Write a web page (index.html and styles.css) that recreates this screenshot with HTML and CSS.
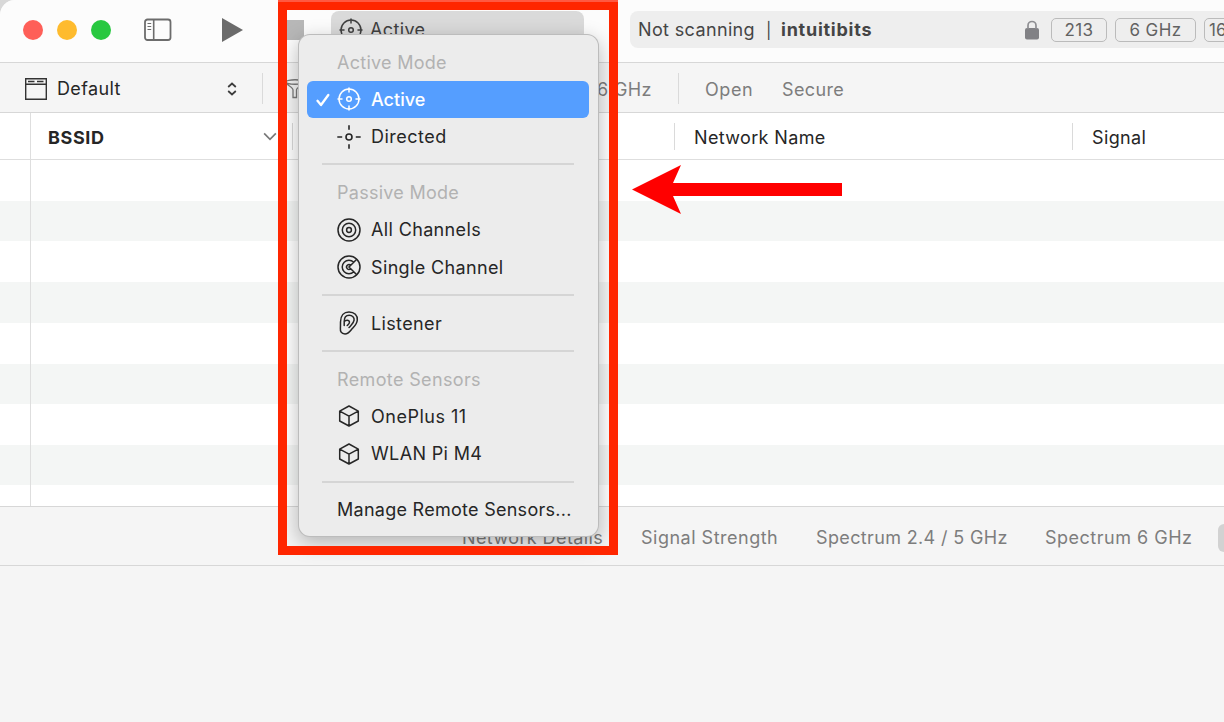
FILE: index.html
```html
<!DOCTYPE html>
<html lang="en">
<head>
<meta charset="utf-8">
<title>WiFi Explorer</title>
<link rel="stylesheet" href="styles.css">
</head>
<body>
<svg class="defs" width="0" height="0">
  <symbol id="target" viewBox="0 0 24 24"><g fill="none" stroke="currentColor" stroke-width="1.5" stroke-linecap="round"><circle cx="12" cy="12" r="10"/><circle cx="12" cy="12" r="2.3"/><path d="M12 1v4M12 19v4M1 12h4M19 12h4"/></g></symbol>
  <symbol id="cross" viewBox="0 0 24 24"><g fill="none" stroke="currentColor" stroke-width="1.6"><circle cx="12" cy="12" r="3"/><path d="M12 .3v4.4M12 19.3v4.4M.3 12h4.9M18.800 12h4.9"/></g></symbol>
  <symbol id="rings" viewBox="0 0 24 24"><g fill="none" stroke="currentColor" stroke-width="1.5"><circle cx="12" cy="12" r="11"/><circle cx="12" cy="12" r="6.700"/><circle cx="12" cy="12" r="2.400"/></g></symbol>
  <symbol id="sector" viewBox="0 0 24 24"><g fill="none" stroke="currentColor" stroke-width="1.5"><circle cx="12" cy="12" r="11"/><path d="M16.700 7.300a6.700 6.700 0 1 0 0 9.400M13.700 10.300a2.400 2.400 0 1 0 0 3.400M20 4l-8 8 8 8"/></g></symbol>
  <symbol id="ear" viewBox="0 0 24 24"><g fill="none" stroke="currentColor" stroke-width="1.5" stroke-linecap="round" stroke-linejoin="round"><path d="M3.500 11C3.500 4.500 7 1 12 1c5.500 0 8.700 3.500 8.300 8-.4 4.600-3.300 6.700-5.800 9.500C12.500 21 11 23 8 23c-4 0-4.800-3-4.600-5.500C3.500 15 3.500 14 3.500 11z"/><path d="M7.200 14.500V10.500C7.200 6.500 9 4.300 12.200 4.300c3.200 0 5.200 2.100 4.900 4.900-.3 3-2.600 4.600-5.100 7.300M7.200 10.800c1-1.800 5-2.300 5.300.4.200 1.500-1 2.300-2.300 3.300"/></g></symbol>
  <symbol id="cube" viewBox="0 0 24 24"><path fill="none" stroke="currentColor" stroke-width="1.5" stroke-linejoin="round" d="M12 2l9.300 5.100v9.900L12 22l-9.300-5V7.100zM2.700 7.100l9.300 5 9.300-5M12 12.100V22"/></symbol>
</svg>
<div class="window">
  <header class="titlebar">
    <div class="lights"><i class="light red"></i><i class="light yellow"></i><i class="light green"></i></div>
    <svg class="sidebar-icon" viewBox="0 0 28 24"><g fill="none" stroke="#6c6c6c"><rect x="1" y="1.500" width="25.500" height="20.500" rx="2.500" stroke-width="1.800"/><path d="M9.700 1.500v20.500" stroke-width="1.600"/><path d="M3.500 5.500h3.700M3.500 8.500h3.700M3.500 11.500h3.700" stroke-width="1.200"/></g></svg>
    <svg class="play-icon" viewBox="0 0 21 24"><path fill="#6b6b6b" d="M0 0l21 12L0 24z"/></svg>
    <span class="stop-icon"></span>
    <div class="mode-picker"><svg class="icon"><use href="#target"/></svg><span>Active</span></div>
    <div class="status">
      <span class="state">Not scanning</span><span class="bar">|</span><strong class="network">intuitibits</strong>
      <svg class="lock" viewBox="0 0 14 20"><rect y="8" width="14" height="11.500" rx="2" fill="#818185"/><path d="M3 9V5.500a4 4 0 0 1 8 0V9" fill="none" stroke="#8e8e92" stroke-width="1.700"/></svg>
      <span class="tag channel">213</span><span class="tag band">6 GHz</span><span class="tag width">16</span>
    </div>
  </header>
  <nav class="filterbar">
    <svg class="profile-icon" viewBox="0 0 22 22"><g fill="none" stroke="#333" stroke-width="1.400"><path d="M.7.700h20.600v20.600H.700zM.7 6.200h20.600"/><path d="M3 3.500h6.500M12 3.500h6.500" stroke-width="1.300"/></g></svg>
    <span class="profile">Default</span>
    <svg class="stepper" viewBox="0 0 10 14"><path d="M1.200 5L5 1.500 8.800 5M1.200 9L5 12.500 8.800 9" fill="none" stroke="#3d3d3d" stroke-width="1.700"/></svg>
    <i class="rule"></i>
    <svg class="funnel" viewBox="0 0 20 20"><path d="M1 3c0-3 18-3 18 0s-18 3-18 0c0 3 7 5 7 8v7.500h3.500V11c0-3 7.500-5 7.500-8" fill="none" stroke="#7a7a7a" stroke-width="1.300"/></svg>
    <span class="six">6 GHz</span>
    <i class="rule second"></i>
    <span class="open">Open</span><span class="secure">Secure</span>
  </nav>
  <main class="table">
    <div class="thead">
      <span class="gutter"></span>
      <strong class="bssid">BSSID</strong>
      <svg class="chevron" viewBox="0 0 12 8"><path d="M.8 1.200L6 6.500l5.200-5.300" fill="none" stroke="#777" stroke-width="1.500"/></svg>
      <i class="col-rule one"></i><i class="col-rule two"></i><span class="name">Network Name</span><i class="col-rule"></i><span class="signal">Signal</span>
    </div>
    <div class="rows"><div class="row-gutter"></div></div>
  </main>
  <nav class="tabs"><span class="details">Network Details</span><span class="strength">Signal Strength</span><span class="spectrum">Spectrum 2.4 / 5 GHz</span><span class="spectrum6">Spectrum 6 GHz</span><i class="selected-tab"></i></nav>
  <section class="panel"></section>
</div>
<div class="menu">
  <div class="item heading"><span>Active Mode</span></div>
  <div class="item selected"><svg class="check" viewBox="0 0 14 14"><path d="M1.500 7.800L5 12 12.300 2" fill="none" stroke="#fff" stroke-width="2.300" stroke-linecap="round" stroke-linejoin="round"/></svg><svg class="icon"><use href="#target"/></svg><span>Active</span></div>
  <div class="item"><svg class="icon"><use href="#cross"/></svg><span class="loose">Directed</span></div>
  <hr>
  <div class="item heading"><span>Passive Mode</span></div>
  <div class="item"><svg class="icon"><use href="#rings"/></svg><span class="medium">All Channels</span></div>
  <div class="item"><svg class="icon"><use href="#sector"/></svg><span class="medium">Single Channel</span></div>
  <hr>
  <div class="item"><svg class="icon"><use href="#ear"/></svg><span class="medium">Listener</span></div>
  <hr>
  <div class="item heading"><span class="medium">Remote Sensors</span></div>
  <div class="item"><svg class="icon"><use href="#cube"/></svg><span class="loose">OnePlus 11</span></div>
  <div class="item"><svg class="icon"><use href="#cube"/></svg><span class="medium">WLAN Pi M4</span></div>
  <hr>
  <div class="item"><span>Manage Remote Sensors...</span></div>
</div>
<div class="callout"></div>
<svg class="arrow" viewBox="0 0 210 49"><path fill="#f00" d="M0 24.500L49 0l-8 18h169v13H41l8 18z"/></svg>
</body>
</html>
```
FILE: styles.css
```css
* { box-sizing: border-box; }
body { margin: 0; width: 1224px; height: 722px; overflow: hidden; position: relative; background: #d8d8d8; font: 18px/24px Inter, "Liberation Sans", sans-serif; color: #262626; letter-spacing: .36px; }
.defs { position: absolute; }
span, strong { white-space: nowrap; flex: none; }
svg, i { flex: none; display: block; }
.icon { width: 24px; height: 24px; }
.window { width: 1224px; height: 722px; display: flex; flex-direction: column; background: #f5f5f5; border-top-left-radius: 15px; overflow: hidden; }

.titlebar { height: 63px; flex: none; display: flex; align-items: center; padding: 0 0 3px 23px; background: #fcfcfc; border-bottom: 1px solid #d7d7d7; }
.lights { display: flex; gap: 14px; flex: none; }
.light { width: 20px; height: 20px; border-radius: 50%; }
.red { background: #fe5f58; }
.yellow { background: #febb2e; }
.green { background: #28c840; }
.sidebar-icon { width: 28px; height: 24px; margin-left: 33px; }
.play-icon { width: 21px; height: 24px; margin-left: 50px; }
.stop-icon { width: 20px; height: 20px; margin-left: 41px; background: #b7b7b7; }
.mode-picker { width: 253px; flex: none; height: 37px; margin-left: 27px; padding-left: 8px; display: flex; align-items: center; gap: 7px; border-radius: 8px; background: #dadada; color: #404040; }
.mode-picker span { padding-top: 1px; }
.status { width: 620px; flex: none; height: 37px; margin-left: 46px; padding-left: 8px; display: flex; align-items: center; border-radius: 8px; background: #eee; color: #454545; }
.state, .network { padding-top: 1px; }
.state { width: 128px; }
.bar { width: 15px; font-size: 16px; }
.network { width: 244px; letter-spacing: .75px; }
.lock { width: 14px; height: 20px; }
.tag { height: 24px; border: 1px solid #bbb; border-radius: 5px; display: flex; justify-content: center; align-items: center; color: #626262; font-size: 17px; }
.channel { width: 56px; margin-left: 12px; }
.band { width: 81px; margin-left: 8px; }
.width { width: 52px; margin-left: 8px; justify-content: flex-start; padding-left: 4px; letter-spacing: 0; }

.filterbar { height: 50px; flex: none; display: flex; align-items: center; padding: 2px 0 0 25px; background: #f5f5f5; border-bottom: 1px solid #d7d7d7; color: #7d7d7d; }
.filterbar span { padding-top: 2px; }
.filterbar .profile { width: 170px; margin-left: 10px; padding-top: 0; color: #262626; }
.profile-icon { width: 22px; height: 22px; }
.stepper { width: 10px; height: 14px; }
.rule { width: 1px; height: 31px; background: #dadada; margin-left: 25px; }
.funnel { width: 20px; height: 20px; margin-left: 22px; }
.six { width: 55px; margin-left: 292px; }
.rule.second { margin-left: 26px; }
.open { width: 50px; margin-left: 26px; letter-spacing: .6px; }
.secure { margin-left: 27px; }

.table { height: 393px; flex: none; display: flex; flex-direction: column; background: #fff; }
.thead { height: 47px; flex: none; display: flex; align-items: center; border-bottom: 1px solid #dedede; }
.gutter { width: 31px; height: 46px; border-right: 1px solid #dedede; }
.bssid { width: 215px; margin-left: 17px; letter-spacing: .6px; padding-top: 3px; }
.chevron { width: 14px; height: 9px; }
.col-rule { width: 1px; height: 27px; margin-top: 1px; background: #dadada; }
.one { margin-left: 15px; }
.two { margin-left: 381px; }
.name { width: 378px; margin-left: 19px; padding-top: 3px; }
.signal { margin-left: 19px; padding-top: 3px; }
.rows { flex: 1; background: repeating-linear-gradient(#fff 0 41px, #f4f6f5 41px 81.300px); }
.row-gutter { width: 31px; height: 100%; border-right: 1px solid #dedede; }
.tabs { height: 60px; flex: none; display: flex; align-items: center; padding-left: 462px; padding-top: 3px; border-top: 1px solid #d7d7d7; border-bottom: 1px solid #d7d7d7; color: #7d7d7d; letter-spacing: .4px; }
.details { width: 179px; }
.strength { width: 175px; letter-spacing: .5px; }
.spectrum { width: 229px; letter-spacing: .36px; }
.spectrum6 { width: 173px; letter-spacing: .5px; }
.selected-tab { width: 40px; height: 28px; border-radius: 6px; background: #d2d2d2; }
.panel { flex: 1; background: #f5f5f5; }

.menu { position: absolute; left: 299px; top: 35px; width: 299px; height: 501px; padding: 8.700px 9px 0 8px; border-radius: 11px; background: #ececec; box-shadow: 0 0 0 1px #bcbcbc, 0 6px 20px 1px rgba(0,0,0,.27); letter-spacing: .27px; }
.item { height: 37.330px; padding: 0 0 0 30px; display: flex; align-items: center; gap: 10px; }
.item .icon { margin-top: -1px; }
.medium { letter-spacing: .36px; }
.loose { letter-spacing: .5px; }
.heading { color: #b2b2b2; padding-top: 1px; }
.selected { padding: 0 0 0 9px; gap: 7px; border-radius: 6px; background: #559eff; color: #fff; font-weight: 500; letter-spacing: 0; }
.selected .icon { margin: -1px 3px 0 0; }
.check { width: 14px; height: 14px; }
.menu hr { margin: 7.800px 15px 8.860px; border: 0; height: 2px; background: #d5d5d5; }
.callout { position: absolute; left: 278px; top: 0; width: 340px; height: 555px; border: 9px solid #ff2600; border-top-width: 10px; }
.callout::before { content: ""; position: absolute; left: -9px; right: -9px; top: -10px; height: 2px; background: #ff5942; }
.arrow { position: absolute; left: 632px; top: 165px; width: 210px; height: 49px; }
```
